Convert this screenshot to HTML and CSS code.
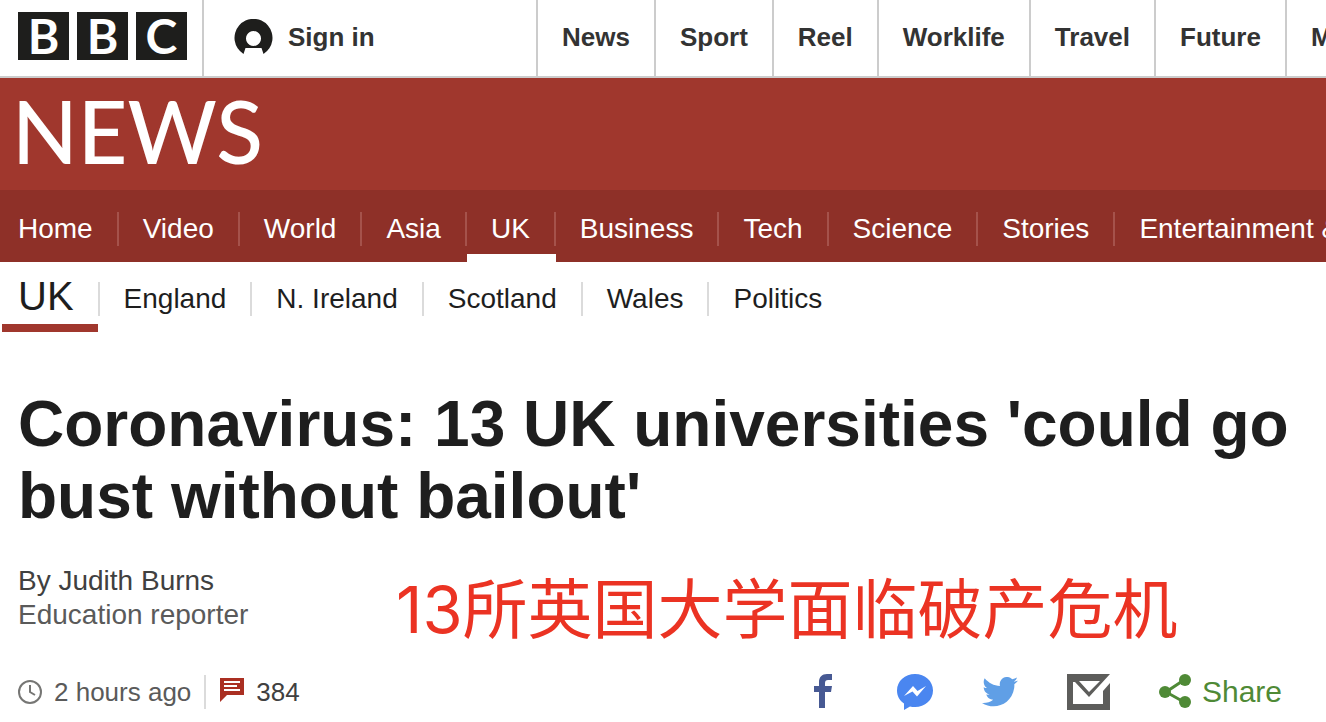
FILE: index.html
```html
<!DOCTYPE html>
<html lang="en">
<head>
  <meta charset="UTF-8">
  <title>Coronavirus: 13 UK universities 'could go bust without bailout' - BBC News</title>
  <meta name="viewport" content="width=device-width, initial-scale=1">
  <link rel="stylesheet" href="styles.css">
</head>
<body>
  <header class="topbar">
    <a class="logo" href="#" aria-label="BBC">
      <span>B</span><span>B</span><span>C</span>
    </a>
    <a class="signin" href="#">
      <svg width="39" height="36" viewBox="0 0 39 36" aria-hidden="true">
        <path fill="#1e1e1c" fill-rule="evenodd" d="M9.500 35 A19 19 0 1 1 29.500 35 L27.500 29 H11.500 Z M19.500 12 a7.500 7.500 0 1 0 0.010 0 Z"/>
      </svg>
      Sign in
    </a>
    <nav class="topnav" aria-label="BBC">
      <a href="#">News</a>
      <a href="#">Sport</a>
      <a href="#">Reel</a>
      <a href="#">Worklife</a>
      <a href="#">Travel</a>
      <a href="#">Future</a>
      <a href="#">More</a>
    </nav>
  </header>

  <div class="brand"><a href="#">NEWS</a></div>

  <nav class="sections" aria-label="News sections">
    <a href="#"><span>Home</span></a>
    <a href="#"><span>Video</span></a>
    <a href="#"><span>World</span></a>
    <a href="#"><span>Asia</span></a>
    <a href="#" class="active"><span>UK</span></a>
    <a href="#"><span>Business</span></a>
    <a href="#"><span>Tech</span></a>
    <a href="#"><span>Science</span></a>
    <a href="#"><span>Stories</span></a>
    <a href="#"><span>Entertainment &amp; Arts</span></a>
  </nav>

  <nav class="regions" aria-label="UK">
    <a href="#" class="current">UK</a>
    <a href="#"><span>England</span></a>
    <a href="#"><span>N. Ireland</span></a>
    <a href="#"><span>Scotland</span></a>
    <a href="#"><span>Wales</span></a>
    <a href="#"><span>Politics</span></a>
  </nav>

  <main class="story">
    <h1>Coronavirus: 13 UK universities 'could go bust without bailout'</h1>

    <div class="intro">
      <div class="byline">
        <div class="name">By Judith Burns</div>
        <div>Education reporter</div>
      </div>
      <p class="note" lang="zh-CN">13所英国大学面临破产危机</p>
    </div>

    <div class="meta">
      <div class="time">
        <svg width="24" height="24" viewBox="0 0 24 24" fill="none" stroke="#767674" stroke-width="2" aria-hidden="true">
          <circle cx="12" cy="12" r="11"/>
          <path d="M12 5V12L17 15"/>
        </svg>
        <time>2 hours ago</time>
      </div>
      <a class="comments" href="#">
        <svg width="24" height="28" viewBox="0 0 24 28" aria-hidden="true">
          <path fill="#aa2f22" d="M0 0H24V17H7L0 24Z"/>
          <path stroke="#fff" stroke-width="2" d="M4 4H20M4 8H17M4 12H20"/>
        </svg>
        384
      </a>

      <div class="share">
        <a href="#" aria-label="Facebook">
          <svg width="46" height="36" viewBox="0 0 46 36">
            <path fill="#475993" d="M17 34V18H12V12H17V8C17 3 20 0 25 0H30V6H26C24 6 23 7 23 9V12H30L29 18H23V34Z"/>
          </svg>
        </a>
        <a href="#" aria-label="Messenger">
          <svg width="36" height="36" viewBox="0 0 36 36">
            <path fill="#4a86f0" d="M18 0C8 0 0 7 0 16.500C0 22 2.500 26.500 7 29.500V36L13 32.500C14.500 33 16 33 18 33C28 33 36 26 36 16.500C36 7 28 0 18 0Z"/>
            <path fill="#fff" d="M7 22L16 12L20.500 17L29 12L20 22.500L15.500 17.500Z"/>
          </svg>
        </a>
        <a href="#" aria-label="Twitter">
          <svg width="36" height="30" viewBox="0 0 36 30">
            <path fill="#609fe6" d="M36 3.500C34.700 4.100 33.300 4.500 31.800 4.700C33.300 3.700 34.500 2.300 35 0.500C33.500 1.400 32 2 30.300 2.300C27.500-.7 23-.8 20.100 1.800C18.100 3.600 17.300 6.400 18 9.100C11.900 8.800 6.500 5.900 2.700 1.300C.7 4.700 1.800 9 5 11.100C3.800 11.100 2.700 10.700 1.700 10.200C1.700 13.800 4.200 16.700 7.600 17.500C6.500 17.800 5.400 17.800 4.300 17.600C5.200 20.500 7.900 22.700 11.200 22.700C8.100 25.100 4.100 26.200 0 25.900C12 33.500 29.500 28.200 32.200 11C32.400 9.800 32.400 8.500 32.300 7.300C33.800 6.200 35 5 36 3.500Z"/>
          </svg>
        </a>
        <a href="#" aria-label="Email">
          <svg width="43" height="36" viewBox="0 0 43 36">
            <path fill="#5d5d5b" fill-rule="evenodd" d="M0 0H43L22 23L8 8H6V30H36V17L43 9V36H0Z M12 7L22 18L33 7Z"/>
          </svg>
        </a>
        <button type="button" class="share-btn">
          <svg width="32" height="36" viewBox="0 0 32 36" aria-hidden="true">
            <path fill="none" stroke="#4f8a36" stroke-width="3" d="M25 6L7 18L25 28"/>
            <g fill="#4f8a36"><circle cx="26" cy="6" r="6"/><circle cx="6" cy="18" r="6"/><circle cx="26" cy="28" r="6"/></g>
          </svg>
          Share
        </button>
      </div>
    </div>
  </main>
</body>
</html>
```
FILE: styles.css
```css
* {
  box-sizing: border-box;
}
body {
  margin: 0;
  font-family: "Liberation Sans", Arial, sans-serif;
  font-size: 28px;
  color: #1e1e1e;
  background: #fff;
  overflow-x: hidden;
}
a {
  color: inherit;
  text-decoration: none;
}
svg {
  display: block;
  flex: none;
}

/* top bar */
.topbar {
  display: flex;
  height: 78px;
  border-bottom: 2px solid #ccc;
  font-size: 26px;
  font-weight: bold;
  line-height: 74px;
  color: #333;
  overflow: hidden;
}
.logo {
  display: flex;
  flex: none;
  gap: 8px;
  padding: 12px 15px 16px 18px;
}
.logo span {
  width: 51px;
  height: 48px;
  background: #1e1e1c;
  color: #fff;
  font-family: Lato, sans-serif;
  font-size: 48px;
  line-height: 48px;
  text-align: center;
}
.signin {
  display: flex;
  flex: 0 0 334px;
  align-items: center;
  gap: 15px;
  padding: 0 0 2px 30px;
  border-left: 2px solid #ccc;
}
.topnav {
  display: flex;
  flex: none;
}
.topnav a {
  padding: 0 24px;
  border-left: 2px solid #ccc;
}

/* red masthead */
.brand {
  height: 112px;
  padding-left: 12px;
  background: #a0372d;
  color: #fff;
  font-family: Lato, sans-serif;
  font-size: 86px;
  font-weight: 500;
  line-height: 106px;
}
.sections {
  display: flex;
  height: 72px;
  background: #8e3028;
  color: #fff;
  white-space: nowrap;
  overflow: hidden;
}
.sections a {
  flex: none;
  padding-top: 22px;
}
.sections span {
  display: block;
  padding: 0 24px;
  border-right: 2px solid #a5524b;
  line-height: 34px;
}
.sections a:first-child span {
  padding-left: 18px;
}
.sections .active {
  border-bottom: 8px solid #fff;
}

/* second level */
.regions {
  display: flex;
  height: 70px;
  padding-left: 2px;
}
.regions a {
  padding-top: 20px;
}
.regions span {
  display: block;
  padding: 0 24px;
  border-left: 2px solid #dbdbdb;
  line-height: 34px;
}
.regions .current {
  padding: 0 24px 0 16px;
  border-bottom: 8px solid #a0372d;
  font-size: 40px;
  line-height: 68px;
}

/* story */
.story {
  padding: 56px 18px 12px;
}
h1 {
  margin: 0;
  font-size: 64px;
  line-height: 72px;
}
.intro {
  display: grid;
  grid-template-columns: 378px 1fr;
  margin-top: 32px;
}
.byline {
  line-height: 34px;
  color: #5a5a5a;
}
.name {
  color: #404040;
}
.note {
  margin: 0;
  color: #eb3323;
  font-family: Inter, "Noto Sans CJK SC", sans-serif;
  font-size: 65px;
  line-height: 92px;
  white-space: nowrap;
}
.meta {
  display: flex;
  align-items: center;
  height: 36px;
  margin-top: 18px;
  font-size: 26px;
  line-height: 34px;
}
.time,
.comments {
  display: flex;
  align-items: center;
  gap: 12px;
}
.time {
  padding-right: 13px;
  border-right: 2px solid #dbdbdb;
  color: #5a5a5a;
}
.comments {
  padding-left: 14px;
  color: #404040;
}
.share {
  display: flex;
  align-items: center;
  gap: 49px;
  margin-left: auto;
  padding-right: 26px;
}
.share-btn {
  display: flex;
  align-items: center;
  gap: 11px;
  padding: 0;
  border: 0;
  background: none;
  color: #4f8a36;
  font: inherit;
  font-size: 30px;
  cursor: pointer;
}
```
